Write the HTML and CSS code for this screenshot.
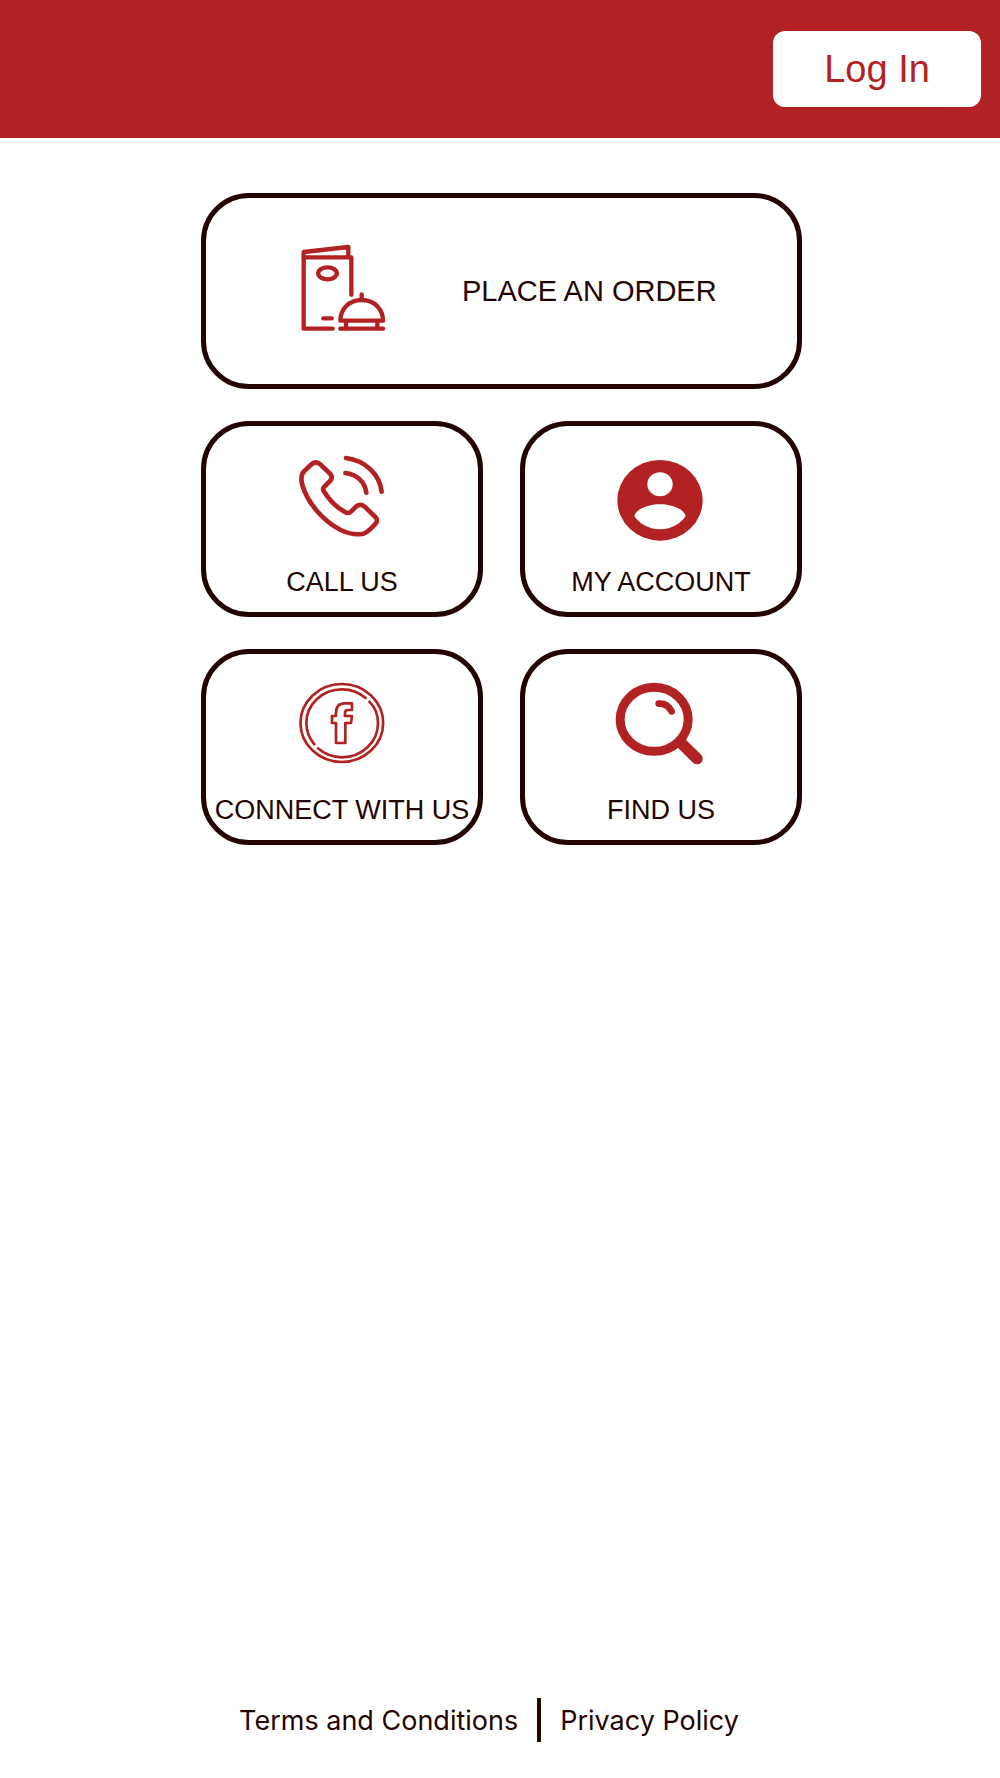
FILE: index.html
```html
<!DOCTYPE html>
<html lang="en">
<head>
    <meta charset="UTF-8">
    <meta name="viewport" content="width=device-width, initial-scale=1.0">
    <title>Home</title>
    <link rel="stylesheet" href="styles.css">
</head>
<body>

<header>
    <button type="button" class="login-button">Log In</button>
</header>

<main class="menu">
    <a href="#order" class="card card-wide">
        <svg class="icon-order" viewBox="60 42 258 282" aria-hidden="true">
            <g class="line" stroke-width="13">
                <path d="M158 296H71V66L205 51V78"/>
                <path d="M71 82H214V194"/>
                <ellipse cx="142.500" cy="130" rx="28" ry="18"/>
                <path d="M130 265H155"/>
                <path d="M181 272H309C309 238 283 210 245 210S181 238 181 272Z"/>
                <path d="M245 208V193"/>
                <path d="M181 296H309"/>
                <path d="M198 276V292M292 276V292"/>
            </g>
        </svg>
        <span>PLACE AN ORDER</span>
    </a>
    <a href="#call" class="card">
        <svg viewBox="54 39 264 252" aria-hidden="true">
            <g class="line" stroke-width="14">
                <path d="M92 72L72 91C61 103 63 117 67 132C83 187 130 240 182 267C205 278 231 282 250 278C259 276 264 271 270 265L287 248C292 242 292 234 286 228L254 197C247 191 238 190 230 195L213 212C207 218 202 217 195 213C169 199 145 173 131 150C128 145 128 143 132 138L151 119C156 113 157 106 151 99L121 70C112 63 101 63 92 72Z"/>
                <path d="M198 51C258 59 299 101 305 152"/>
                <path d="M196 96C231 100 255 123 259 155"/>
            </g>
        </svg>
        <span>CALL US</span>
    </a>
    <a href="#account" class="card">
        <svg viewBox="80 39 264 252" aria-hidden="true">
            <ellipse class="solid" cx="209" cy="178" rx="128" ry="121"/>
            <ellipse class="hole" cx="209" cy="130" rx="38" ry="36"/>
            <path class="hole" d="M132 225C138 202 178 190 209 190S280 202 286 225C270 250 240 265 209 265S148 250 132 225Z"/>
        </svg>
        <span>MY ACCOUNT</span>
    </a>
    <a href="#connect" class="card">
        <svg viewBox="54 39 264 252" aria-hidden="true">
            <g class="line" stroke-width="8">
                <ellipse cx="185.500" cy="162" rx="124" ry="117"/>
                <path d="M103 226C89 209 79 187 79 162C79 106 127 61 186 61C213 61 238 71 257 87"/>
                <path d="M268 98C284 114 294 137 294 162C294 219 246 265 186 265C158 265 133 255 114 238"/>
                <path d="M168 222V162H156V141H168V132C168 111 179 103 194 103H216V123H203C197 123 195 126 195 132V141H216L213 162H196V222Z"/>
            </g>
        </svg>
        <span>CONNECT WITH US</span>
    </a>
    <a href="#find" class="card">
        <svg viewBox="80 39 264 252" aria-hidden="true">
            <g class="line">
                <ellipse cx="191.500" cy="151" rx="102" ry="96" stroke-width="27"/>
                <path stroke-width="34" d="M272 222L320 269"/>
                <path stroke-width="20" d="M205 104C223 102 235 111 244 127"/>
            </g>
        </svg>
        <span>FIND US</span>
    </a>
</main>

<footer>
    <a href="#terms">Terms and Conditions</a>
    <span class="divider"></span>
    <a href="#privacy">Privacy Policy</a>
</footer>

</body>
</html>
```
FILE: styles.css
```css
* {
    box-sizing: border-box;
}
body {
    font-family: "Liberation Sans", Arial, sans-serif;
    margin: 0;
    min-height: 100vh;
    display: flex;
    flex-direction: column;
    background-color: white;
    color: #230400;
}
a {
    color: inherit;
    text-decoration: none;
}
header {
    display: flex;
    justify-content: flex-end;
    padding: 31px 19px;
    background-color: #b22222;
}
.login-button {
    width: 208px;
    height: 76px;
    padding: 0;
    border: none;
    border-radius: 12px;
    background-color: white;
    color: #b22222;
    font-family: inherit;
    font-size: 38px;
    cursor: pointer;
}
.menu {
    display: grid;
    grid-template-columns: 1fr 1fr;
    gap: 32px 37px;
    margin: 55px 198px 48px 201px;
}
.card {
    display: flex;
    flex-direction: column;
    align-items: center;
    gap: 28px;
    padding: 28px 0 14px;
    border: 5px solid #230400;
    border-radius: 48px;
    font-size: 27px;
    line-height: 32px;
    white-space: nowrap;
}
.card svg {
    width: 88px;
    height: 84px;
    overflow: visible;
}
.card-wide {
    grid-column: 1 / 3;
    flex-direction: row;
    gap: 76px;
    padding: 46px 94px;
    font-size: 29px;
}
.card .icon-order {
    width: 86px;
    height: 94px;
}
.line {
    fill: none;
    stroke: #b22222;
    stroke-linecap: round;
    stroke-linejoin: round;
}
.solid {
    fill: #b22222;
}
.hole {
    fill: white;
}
footer {
    display: flex;
    justify-content: center;
    align-items: center;
    gap: 19px;
    margin-top: auto;
    padding: 0 22px 36px 0;
    font-family: Inter, sans-serif;
    font-size: 27px;
}
.divider {
    width: 4px;
    height: 44px;
    background-color: #230400;
}
```
